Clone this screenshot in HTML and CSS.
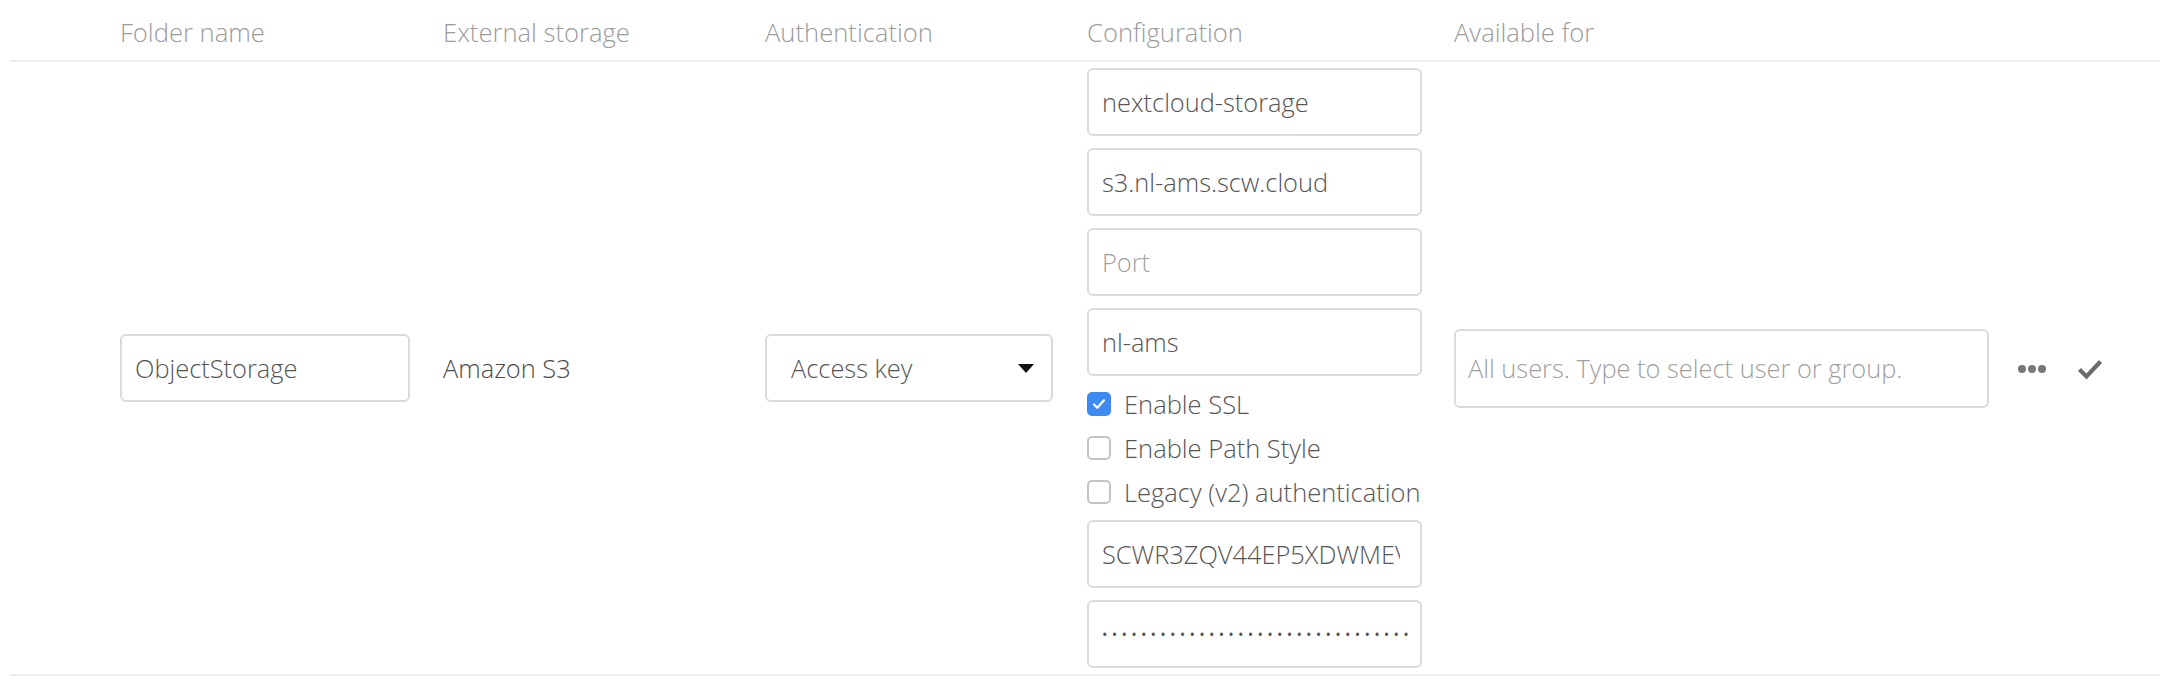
FILE: index.html
```html
<!DOCTYPE html>
<html lang="en">
<head>
    <meta charset="UTF-8">
    <title>External storages</title>
    <link rel="stylesheet" href="styles.css">
</head>
<body>

<table class="mounts">
    <thead>
        <tr>
            <th class="col-status"></th>
            <th class="col-folder">Folder name</th>
            <th class="col-backend">External storage</th>
            <th class="col-auth">Authentication</th>
            <th class="col-config">Configuration</th>
            <th class="col-users">Available for</th>
            <th class="col-actions"></th>
        </tr>
    </thead>
    <tbody>
        <tr>
            <td></td>
            <td><input class="field folder-input" type="text" value="ObjectStorage"></td>
            <td class="backend">Amazon S3</td>
            <td>
                <select class="field auth-select">
                    <option>Access key</option>
                </select>
            </td>
            <td>
                <div class="config">
                    <!-- bucket / host / port / region -->
                    <input class="field config-input" type="text" value="nextcloud-storage">
                    <input class="field config-input" type="text" value="s3.nl-ams.scw.cloud">
                    <input class="field config-input" type="text" placeholder="Port">
                    <input class="field config-input" type="text" value="nl-ams">

                    <label class="check"><span class="box checked"><svg viewBox="0 0 24 24" width="24" height="24"><path d="M6 12.5l4 4 8-9" fill="none" stroke="#fff" stroke-width="2.6" stroke-linecap="round" stroke-linejoin="round"/></svg></span>Enable SSL</label>
                    <label class="check"><span class="box"></span>Enable Path Style</label>
                    <label class="check"><span class="box"></span>Legacy (v2) authentication</label>

                    <input class="field config-input key" type="text" value="SCWR3ZQV44EP5XDWMEVQ">
                    <input class="field config-input secret" type="password" value="aaaaaaaaaaaaaaaaaaaaaaaaaaaaaaaaaaaaaaaa">
                </div>
            </td>
            <td><input class="field users-input" type="text" placeholder="All users. Type to select user or group."></td>
            <td class="actions">
                <svg class="icon-more" viewBox="0 0 28 10" width="28" height="10">
                    <circle cx="4" cy="5" r="4" fill="#777"/>
                    <circle cx="14" cy="5" r="4" fill="#777"/>
                    <circle cx="24" cy="5" r="4" fill="#777"/>
                </svg>
                <svg class="icon-save" viewBox="0 0 26 22" width="26" height="22">
                    <path d="M2.5 11.5l7 7 14-15" fill="none" stroke="#6b6b6b" stroke-width="4.2"/>
                </svg>
            </td>
        </tr>
    </tbody>
</table>

</body>
</html>
```

FILE: styles.css
```css
body {
    margin: 0;
    font-family: "Open Sans", "Liberation Sans", sans-serif;
    font-weight: 300;
    background-color: #ffffff;
    color: #555555;
}

.mounts {
    margin-left: 10px;
    width: 2150px;
    border-collapse: collapse;
    table-layout: fixed;
}

.mounts th {
    height: 56px;
    padding: 4px 0 0 0;
    text-align: left;
    font-size: 25.6px;
    font-weight: 300;
    color: #9b9b9b;
    border-bottom: 2px solid #ededed;
}

.mounts td {
    padding: 0;
    vertical-align: middle;
    border-bottom: 2px solid #ededed;
}

.col-status { width: 110px; }
.col-folder { width: 323px; }
.col-backend { width: 322px; }
.col-auth { width: 322px; }
.col-config { width: 367px; }
.col-users { width: 564px; }

.field {
    display: block;
    box-sizing: border-box;
    height: 68px;
    margin: 0;
    padding: 0 12px 0 13px;
    border: 2px solid #dbdbdb;
    border-radius: 6px;
    background-color: #ffffff;
    font-family: "Open Sans", "Liberation Sans", sans-serif;
    font-size: 25.4px;
    font-weight: 300;
    color: #555555;
    outline: none;
}

.field::placeholder {
    color: #a0a0a0;
    font-weight: 300;
}

.folder-input {
    width: 290px;
}

.backend {
    font-size: 25.4px;
    color: #4a4a4a;
}

.auth-select {
    width: 288px;
    padding-left: 24px;
    appearance: none;
    -webkit-appearance: none;
    background-image: url("data:image/svg+xml,%3Csvg xmlns='http://www.w3.org/2000/svg' width='16' height='9'%3E%3Cpath d='M0 0h16L8 9z' fill='%23111'/%3E%3C/svg%3E");
    background-repeat: no-repeat;
    background-position: right 17px center;
}

.config {
    display: flex;
    flex-direction: column;
}

.config-input {
    width: 335px;
    margin: 6px 0;
}

.key {
    padding-right: 20px;
}

.secret {
    font-size: 20px;
    letter-spacing: 2.2px;
    padding-left: 12px;
}

.check {
    display: flex;
    align-items: center;
    height: 44px;
    font-size: 25.5px;
    color: #555555;
    white-space: nowrap;
}

.box {
    display: inline-flex;
    align-items: center;
    justify-content: center;
    box-sizing: border-box;
    width: 24px;
    height: 24px;
    margin-right: 13px;
    border: 2px solid #c4c4c4;
    border-radius: 5px;
    background-color: #ffffff;
}

.box.checked {
    border-color: #3c8af2;
    background-color: #3c8af2;
}

.users-input {
    width: 535px;
    height: 79px;
    padding-left: 12px;
}

.actions {
    white-space: nowrap;
}

.icon-more {
    vertical-align: middle;
    margin-right: 27px;
}

.icon-save {
    vertical-align: middle;
}
```
